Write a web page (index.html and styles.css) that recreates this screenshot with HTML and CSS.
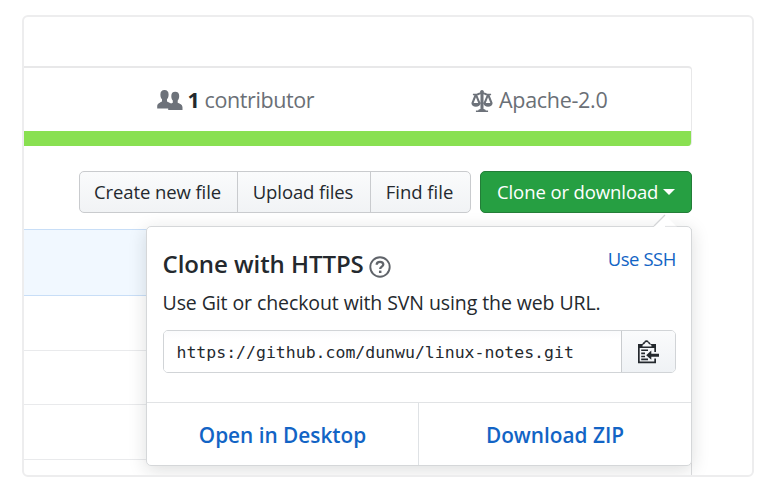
FILE: index.html
```html
<!DOCTYPE html>
<html lang="en">
<head>
<meta charset="utf-8">
<title>Clone or download</title>
<link rel="stylesheet" href="styles.css">
</head>
<body>
<main class="frame">
  <section class="summary">
    <div class="stats">
      <div class="stat contributors">
        <svg class="people" width="26" height="20" viewBox="0 0 26 20"><path d="M3.400 4.500Q3.400 0 7.500 0Q11.600 0 11.600 4.500C11.600 7 10.800 8.200 10 9.200V11.400L14 13.500V18.500H.2V16.500C.2 13.700 1.500 13.200 5 11.400V9.200C4.100 8.200 3.400 7 3.400 4.500Z"/><path d="M14.300 6Q14.300 1.700 18.200 1.700Q22.200 1.700 22.200 6C22.200 8.400 21.500 9.500 20.700 10.500V12.700C24.200 14.300 25.500 14.800 25.500 17.500V20H11.200V17.500C11.200 14.800 12.500 14.300 15.800 12.700V10.500C14.900 9.500 14.300 8.400 14.300 6Z"/></svg>
        <span><b>1</b> contributor</span>
      </div>
      <div class="stat license">
        <svg width="22" height="22" viewBox="0 0 14 14.500"><path d="M7 0a1.250 1.250 0 0 0-1.200 1.600C4.500 1.800 4 2.500 2.500 2.500H1v1h1L0 8.500C0 10 1.300 11 3 11s3-1 3-2.500L3.900 3.500c.9 0 1.300-.5 2.100-.7V12.500c-.8 0-1.500.5-1.500 1H3v1h8v-1H9.500c0-.5-.7-1-1.500-1V2.800c.8.2 1.200.7 2.100.7L8 8.500C8 10 9.300 11 11 11s3-1 3-2.500L12 3.500h1v-1h-1.500c-1.500 0-2-.7-3.300-.9A1.250 1.250 0 0 0 7 0ZM3 4.700 4.500 8.500h-3ZM11 4.700l1.500 3.800h-3Z"/></svg>
        <span>Apache-2.0</span>
      </div>
    </div>
    <div class="language-bar"></div>
  </section>

  <div class="actions">
    <div class="button-group">
      <button class="button">Create new file</button>
      <button class="button upload">Upload files</button>
      <button class="button find">Find file</button>
    </div>
    <button class="button primary">Clone or download<i class="caret"></i></button>
  </div>

  <section class="files">
    <div class="commit"></div>
    <div class="row"></div>
    <div class="row"></div>
    <div class="row"></div>
    <div class="row"></div>
  </section>

  <aside class="popover">
    <svg class="pointer" width="24" height="13" viewBox="0 0 24 13"><path d="M1 12 12 1 23 12V13H1Z" fill="#fff"/><path d="M1 12 12 1" fill="none" stroke="#d3d4d6" stroke-width="1.300"/><path d="M12 12.400H24" stroke="#e0e1e3"/></svg>
    <div class="clone">
      <div class="heading">
        <h1>Clone with HTTPS</h1>
        <svg class="help" width="22" height="22" viewBox="0 0 22 22"><circle cx="11" cy="11" r="9.700"/><path d="M7.700 8.800C7.700 6.800 9 5.800 11 5.800S14.300 6.900 14.300 8.600C14.300 10.700 11.200 10.600 11.200 13" stroke-width="2.300"/><path d="M11.200 14.600V17" stroke-width="2.500"/></svg>
        <a class="ssh">Use SSH</a>
      </div>
      <p>Use Git or checkout with SVN using the web URL.</p>
      <div class="url-field">
        <div class="url">https://github.com/dunwu/linux-notes.git</div>
        <button class="copy" aria-label="Copy">
          <svg width="22" height="24" viewBox="0 0 22 24"><path d="M1 4H5.500C5.500 2.700 6.500 2.300 7.300 2.300C7.300 1 8 .3 9.500.3S11.700 1 11.700 2.300C12.500 2.300 13.500 2.700 13.500 4H19V12H17.300V8H2.700V21.500H17.300V18.500H19V23.200H1ZM5.500 6.400H14.500C14.500 5 14 4.500 13 4.500C12 4.500 11.700 3.800 11.100 2.800C10.500 1.800 8.800 1.800 8.200 2.800C7.600 3.800 7.200 4.500 6.500 4.500C5.800 4.500 5.500 5 5.500 6.400Z"/><path d="M4.200 9.500H11V11.100H4.200ZM4.200 12.600H8V14.200H4.200ZM4.200 15.700H8V17.300H4.200ZM4.200 18.600H11V20.200H4.200ZM9.200 15.200 14.300 10.600V13.800H22V16.700H14.300V19.800Z"/></svg>
        </button>
      </div>
    </div>
    <div class="links">
      <a>Open in Desktop</a>
      <a>Download ZIP</a>
    </div>
  </aside>
</main>
</body>
</html>
```
FILE: styles.css
```css
* {
  box-sizing: border-box;
}

body {
  margin: 0;
  padding: 15px 0 0 22px;
  background: #fff;
  color: #24292e;
  font-family: "Open Sans", "Noto Sans", sans-serif;
}

.frame {
  position: relative;
  width: 732px;
  height: 462px;
  padding: 49px 60px 0 0;
  border: 2px solid #ededee;
  border-radius: 6px;
  overflow: hidden;
}

.summary {
  height: 80px;
  border: solid #e8e8e9;
  border-width: 2px 1px 0 0;
  border-radius: 0 4px 4px 0;
  overflow: hidden;
}

.stats {
  display: flex;
  height: 63px;
}

.stat {
  display: flex;
  align-items: center;
  color: #6a6f76;
  font-size: 21.5px;
  line-height: 30px;
}

.stat svg {
  fill: #6d727a;
}

.stat b {
  color: #24292e;
}

.contributors {
  width: 314px;
  padding-left: 133px;
  gap: 4.5px;
  letter-spacing: -0.4px;
}

.license {
  padding-left: 133px;
  gap: 6px;
  letter-spacing: -0.3px;
}

.license svg {
  margin-top: 3px;
}

.language-bar {
  height: 15px;
  background: #89e051;
}

.actions {
  display: flex;
  justify-content: space-between;
  height: 42px;
  margin: 25px 0 16px;
  padding-left: 55px;
}

.button-group {
  display: flex;
  width: 392px;
}

.button {
  width: 159px;
  padding: 0 2px 0 0;
  border: 1px solid #c9cbce;
  background: linear-gradient(#fafbfc, #f1f3f5);
  color: #24292e;
  font: 500 18.5px/40px "Open Sans", "Noto Sans", sans-serif;
  letter-spacing: -0.1px;
  white-space: nowrap;
}

.button:first-child {
  border-radius: 5px 0 0 5px;
}

.button.upload {
  width: 134px;
  margin-left: -1px;
}

.button.find {
  width: 101px;
  margin-left: -1px;
  border-radius: 0 5px 5px 0;
  letter-spacing: 0;
}

.button.primary {
  display: flex;
  align-items: center;
  width: 212px;
  padding-left: 16px;
  gap: 5px;
  border-color: #237d38;
  border-radius: 5px;
  background: #269f42;
  color: #fff;
}

.caret {
  border: solid transparent;
  border-width: 6px 6px 0;
  border-top-color: #fff;
}

.files {
  height: 260px;
  border-right: 1px solid #dcdddf;
}

.commit {
  height: 67px;
  border: solid #c8def7;
  border-width: 1px 0;
  background: #f1f8ff;
}

.row {
  height: 54.500px;
  border-bottom: 1.500px solid #e9eaec;
}

.popover {
  position: absolute;
  top: 209px;
  left: 122px;
  width: 546px;
  height: 240px;
  border: 1px solid #d5d7d9;
  border-radius: 5px;
  background: #fff;
  box-shadow: 0 4px 18px rgba(27, 31, 35, 0.15);
}

.pointer {
  position: absolute;
  top: -13px;
  right: 14px;
}

.clone {
  height: 175px;
  padding: 19px 15px 0 15.5px;
}

.heading {
  display: flex;
  align-items: flex-start;
  height: 42px;
}

h1 {
  margin: 0;
  font-size: 24px;
  font-weight: 600;
  line-height: 36px;
  letter-spacing: -0.06px;
}

.help {
  margin: 10px 0 0 5px;
  fill: none;
  stroke: #60646a;
  stroke-width: 1.900;
}

a {
  color: #1264c5;
}

.ssh {
  margin-left: auto;
  font-size: 18.5px;
  line-height: 26px;
  letter-spacing: -0.45px;
}

p {
  margin: 0 0 12px;
  font-size: 19.5px;
  line-height: 30px;
  letter-spacing: -0.09px;
  white-space: nowrap;
}

.url-field {
  display: flex;
  height: 43px;
  border: 1px solid #d1d4d7;
  border-radius: 5px;
  overflow: hidden;
}

.url {
  width: 457px;
  padding-left: 13px;
  background: linear-gradient(#fafbfc, #fff 8px);
  font: 16.500px/43px "DejaVu Sans Mono", monospace;
}

.copy {
  flex: 1;
  padding: 0;
  border: 0;
  border-left: 1px solid #c9cccf;
  background: linear-gradient(#fafbfc, #eff2f5);
}

.copy svg {
  display: block;
  margin: 0 0 0 15px;
  fill: #24292e;
}

.links {
  display: flex;
  height: 63px;
  border-top: 1px solid #e1e3e5;
}

.links a {
  width: 271px;
  font-size: 20.800px;
  font-weight: 600;
  line-height: 64px;
  text-align: center;
}

.links a + a {
  flex: 1;
  border-left: 1px solid #dfe2e5;
}
```
